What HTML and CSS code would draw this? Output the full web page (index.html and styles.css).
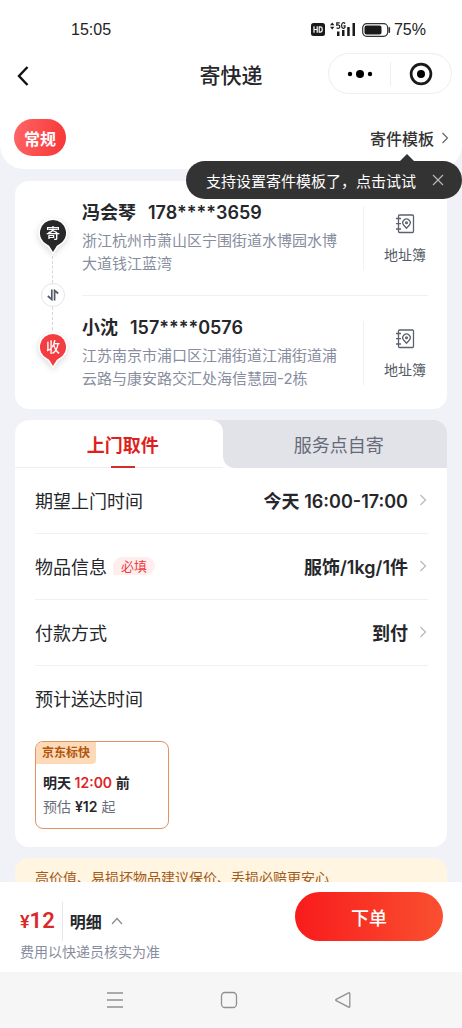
FILE: index.html
```html
<!DOCTYPE html>
<html lang="zh-CN">
<head>
<meta charset="utf-8">
<meta name="viewport" content="width=device-width, initial-scale=1">
<title>寄快递</title>
<link rel="stylesheet" href="styles.css">
</head>
<body>
<div class="app">
  <header class="header">
    <div class="status">
      <span class="clock">15:05</span>
      <div class="status-icons">
        <svg width="14" height="13" viewBox="0 0 14 13" aria-hidden="true"><rect width="14" height="13" rx="2.5" fill="#1a1a1a"/><path d="M3 3.2v6.6M6.2 3.2v6.600M3 6.5h3.2M8.2 3.8v5.4h1.100c1.2 0 1.9-.9 1.9-2.7s-.7-2.7-1.9-2.7z" fill="none" stroke="#fff" stroke-width="1.2"/></svg>
        <svg class="signal" width="26" height="15" viewBox="0 0 26 15" aria-hidden="true"><path d="M0 3.2 2.2.6l2.2 2.6zM0 4.8l2.2 2.6 2.2-2.6z" fill="#1a1a1a"/><path d="M9.7.9H6.8v2.3c1.8-.6 3 0 3 1.5 0 1.7-2 2.1-3.2 1M15 1.8C14-.1 11.6 .4 11.6 3.5s2.6 3.5 3.4 1.8V3.9h-1.5" fill="none" stroke="#1a1a1a" stroke-width="1.2"/><path d="M7 9.500h2.500V14H7zM12 8h2.500v6H12zM17.200 5h2.500v9h-2.500zM22.500 1H25v13h-2.500z" fill="#1a1a1a"/></svg>
        <svg class="battery" width="29" height="14" viewBox="0 0 29 14" aria-hidden="true"><rect x=".7" y=".7" width="25" height="12.600" rx="4" fill="none" stroke="#333" stroke-width="1.200"/><rect x="2.500" y="2.500" width="17" height="9" rx="2" fill="#1a1a1a"/><path d="M27.300 4.800v4.400" stroke="#333" stroke-width="1.600" stroke-linecap="round"/></svg>
        <span>75%</span>
      </div>
    </div>
    <div class="titlebar">
      <button class="back" aria-label="返回"><svg width="14" height="22" viewBox="0 0 14 22"><path d="M11.500 2 3 11l8.500 9" fill="none" stroke="#111" stroke-width="2.400"/></svg></button>
      <h1 class="title">寄快递</h1>
      <div class="capsule">
        <button aria-label="更多"><svg width="26" height="10" viewBox="0 0 26 10"><circle cx="3" cy="5" r="2.200"/><circle cx="13" cy="5" r="4"/><circle cx="23" cy="5" r="2.200"/></svg></button>
        <button aria-label="关闭"><svg width="24" height="24" viewBox="0 0 24 24"><circle cx="12" cy="12" r="9.900" fill="none" stroke="#1a1a1a" stroke-width="2.700"/><circle cx="12" cy="12" r="4"/></svg></button>
      </div>
    </div>
    <div class="modes">
      <button class="mode">常规</button>
      <a class="template-link" href="#">寄件模板<svg width="8" height="12" viewBox="0 0 8 12"><path d="m1.500 1 5 5-5 5" fill="none" stroke="#666" stroke-width="1.200"/></svg></a>
    </div>
    <div class="tooltip" role="status">
      <span>支持设置寄件模板了，点击试试</span>
      <button aria-label="关闭提示"><svg width="12" height="12" viewBox="0 0 12 12"><path d="m1 1 10 10M11 1 1 11" stroke="#bbb" stroke-width="1.100"/></svg></button>
    </div>
  </header>

  <main class="content">
    <section class="card parties">
      <div class="rail">
        <svg class="pin" width="40" height="40" viewBox="0 0 40 40"><path d="M20 2.500a14.500 14.500 0 0 0-6.500 27.500c1.500 1 1.500 1 2.200 2.200L20 38.500l4.300-6.300c.7-1.200.7-1.200 2.200-2.200A14.500 14.500 0 0 0 20 2.500z" fill="#fff"/><path d="M20 4a13 13 0 0 0-5.500 24.800c1.500.7 1.800 1.100 2.400 2.200L20 36l3.100-5c.6-1.100.9-1.500 2.400-2.200A13 13 0 0 0 20 4z" fill="#28282a"/><text x="20" y="22">寄</text></svg>
        <span class="dash dash-top"></span>
        <button class="swap" aria-label="交换寄收件人"><svg width="12" height="12" viewBox="0 0 12 12"><path d="M4.800 .5v10L.8 7M7.600 11.500v-10l3.600 3" fill="none" stroke="#555b68" stroke-width="1.700"/></svg></button>
        <span class="dash"></span>
        <svg class="pin" width="40" height="40" viewBox="0 0 40 40"><path d="M20 2.500a14.500 14.500 0 0 0-6.500 27.500c1.500 1 1.500 1 2.200 2.200L20 38.500l4.300-6.300c.7-1.200.7-1.200 2.200-2.200A14.500 14.500 0 0 0 20 2.500z" fill="#fff"/><path d="M20 4a13 13 0 0 0-5.500 24.800c1.500.7 1.800 1.100 2.400 2.200L20 36l3.100-5c.6-1.100.9-1.500 2.400-2.200A13 13 0 0 0 20 4z" fill="#f33d40"/><text x="20" y="22">收</text></svg>
      </div>
      <div class="people">
        <div class="person">
          <div class="who">
            <h2 class="name"><span>冯会琴</span><span>178****3659</span></h2>
            <p class="address">浙江杭州市萧山区宁围街道水博园水博大道钱江蓝湾</p>
          </div>
          <button class="book"><svg width="20" height="20" viewBox="0 0 20 20"><g fill="none" stroke="#5c616e" stroke-width="1.300"><rect x="3.500" y="1" width="15" height="17.500" rx="1"/><path d="M1 4.500h5M1 9.700h5M1 15h5M11.500 14.200 8.600 11a3.700 3.700 0 1 1 5.800 0z"/><circle cx="11.500" cy="8.800" r=".9"/></g></svg>地址簿</button>
        </div>
        <div class="person">
          <div class="who">
            <h2 class="name"><span>小沈</span><span>157****0576</span></h2>
            <p class="address">江苏南京市浦口区江浦街道江浦街道浦云路与康安路交汇处海信慧园-2栋</p>
          </div>
          <button class="book"><svg width="20" height="20" viewBox="0 0 20 20"><g fill="none" stroke="#5c616e" stroke-width="1.300"><rect x="3.500" y="1" width="15" height="17.500" rx="1"/><path d="M1 4.500h5M1 9.700h5M1 15h5M11.500 14.200 8.600 11a3.700 3.700 0 1 1 5.800 0z"/><circle cx="11.500" cy="8.800" r=".9"/></g></svg>地址簿</button>
        </div>
      </div>
    </section>

    <section class="card">
      <div class="tabs" role="tablist">
        <button class="tab tab-active" role="tab" aria-selected="true">上门取件</button>
        <button class="tab tab-other" role="tab" aria-selected="false">服务点自寄</button>
      </div>
      <div class="rows">
        <button class="row"><span>期望上门时间</span><strong>今天 16:00-17:00</strong><svg width="8" height="12" viewBox="0 0 8 12"><path d="m1.500 1 5 5-5 5" fill="none" stroke="#b5b8c0" stroke-width="1.200"/></svg></button>
        <button class="row"><span>物品信息</span><em class="required">必填</em><strong>服饰/1kg/1件</strong><svg width="8" height="12" viewBox="0 0 8 12"><path d="m1.500 1 5 5-5 5" fill="none" stroke="#b5b8c0" stroke-width="1.200"/></svg></button>
        <button class="row"><span>付款方式</span><strong>到付</strong><svg width="8" height="12" viewBox="0 0 8 12"><path d="m1.500 1 5 5-5 5" fill="none" stroke="#b5b8c0" stroke-width="1.200"/></svg></button>
        <h2 class="row row-last">预计送达时间</h2>
        <button class="option">
          <span class="option-tag">京东标快</span>
          <span class="option-time">明天 <b>12:00</b> 前</span>
          <span class="option-price">预估 <b>¥12</b> 起</span>
        </button>
      </div>
    </section>

    <section class="notice">高价值、易损坏物品建议保价、丢损必赔更安心</section>
  </main>

  <footer class="checkout">
    <div class="cost">
      <div class="total">
        <span class="price"><small>¥</small>12</span>
        <button class="detail">明细<svg width="12" height="8" viewBox="0 0 12 8"><path d="m1 7 5-5.500L11 7" fill="none" stroke="#888" stroke-width="1.200"/></svg></button>
      </div>
      <p class="hint">费用以快递员核实为准</p>
    </div>
    <button class="submit">下单</button>
  </footer>
  <nav class="sysnav">
    <button aria-label="最近任务"><svg width="18" height="18" viewBox="0 0 18 18"><path d="M1 2h16M1 9h16M1 16h16"/></svg></button>
    <button aria-label="主页"><svg width="18" height="18" viewBox="0 0 18 18"><rect x="1.500" y="1.500" width="15" height="15" rx="3.500"/></svg></button>
    <button aria-label="返回"><svg width="18" height="18" viewBox="0 0 18 18"><path d="M15.800 2.500v13c0 .8-.5 1-1.200.6L2.200 9.700c-.7-.4-.7-1 0-1.400l12.400-6.400c.7-.4 1.200-.2 1.200.6z"/></svg></button>
  </nav>
</div>
</body>
</html>
```
FILE: styles.css
```css
* {
  box-sizing: border-box;
}

body {
  margin: 0;
  background: #f0f2f7;
  color: #26272b;
  font-family: Inter, "Noto Sans CJK SC", sans-serif;
  font-size: 18px;
}

h1, h2, p {
  margin: 0;
  font-weight: 400;
}

button {
  margin: 0;
  padding: 0;
  border: 0;
  background: none;
  color: inherit;
  font: inherit;
  cursor: pointer;
}

svg {
  flex: none;
}

.app {
  display: flex;
  flex-direction: column;
  height: 100vh;
}

/* Header */
.header {
  position: relative;
  z-index: 1;
  flex: none;
  padding-bottom: 13px;
  background: #fff;
  border-radius: 0 0 24px 24px;
}

.status {
  display: flex;
  align-items: center;
  justify-content: space-between;
  height: 53px;
  padding: 6px 36px 0 71px;
  color: #222;
  font-family: "Liberation Sans", Arial, sans-serif;
  font-size: 16px;
}

.status-icons {
  display: flex;
  align-items: center;
}

.signal {
  margin-left: 5px;
}

.battery {
  margin: 0 3px 0 6px;
}

.titlebar {
  display: grid;
  grid-template-columns: 124px 1fr 124px;
  align-items: center;
  height: 41px;
  padding: 0 10px;
}

.back {
  display: flex;
  padding: 6px 6px 2px;
  justify-self: start;
}

.title {
  padding-top: 5px;
  font-size: 21px;
  font-weight: 500;
  line-height: 28px;
  text-align: center;
}

.capsule {
  display: flex;
  height: 41px;
  border: 1px solid #eee;
  border-radius: 21px;
}

.capsule button {
  display: flex;
  flex: 1;
  align-items: center;
  justify-content: center;
}

.capsule button + button {
  background: linear-gradient(#eee, #eee) left center / 1px 24px no-repeat;
}

.modes {
  display: flex;
  align-items: center;
  justify-content: space-between;
  margin-top: 25px;
  padding: 0 13px 0 14px;
}

.mode {
  width: 52px;
  height: 37px;
  border-radius: 19px;
  background: linear-gradient(100deg, #ff6566, #f83535);
  color: #fff;
  font-size: 16px;
  font-weight: 700;
}

.template-link {
  display: flex;
  align-items: center;
  gap: 7px;
  color: #333;
  font-size: 16px;
  font-weight: 500;
  text-decoration: none;
}

.tooltip {
  position: absolute;
  top: 161px;
  right: 0;
  display: flex;
  align-items: center;
  gap: 16px;
  height: 38px;
  padding: 0 18px 0 20px;
  border-radius: 19px;
  background: #333;
  color: #fff;
  font-size: 15px;
  white-space: nowrap;
}

.tooltip::before {
  content: "";
  position: absolute;
  right: 48px;
  bottom: 100%;
  border: 7px solid transparent;
  border-top: 0;
  border-bottom-color: #333;
}

.tooltip button {
  display: flex;
}

/* Content */
.content {
  display: flex;
  flex: 1;
  flex-direction: column;
  gap: 11px;
  min-height: 0;
  padding: 12px 15px 0;
  overflow: hidden;
}

.card {
  flex: none;
  border-radius: 14px;
  background: #fff;
  overflow: hidden;
}

.parties {
  display: flex;
  padding-right: 19px;
}

.rail {
  display: flex;
  flex: none;
  flex-direction: column;
  align-items: center;
  width: 67px;
  padding: 35px 0 0 8px;
}

.pin {
  filter: drop-shadow(0 2px 3px rgba(0, 0, 0, 0.15));
}

.pin text {
  fill: #fff;
  font-size: 14px;
  font-weight: 500;
  text-anchor: middle;
}

.dash {
  height: 23px;
  border-left: 1px dashed #d5d7dd;
}

.dash-top {
  height: 27px;
}

.swap {
  display: flex;
  align-items: center;
  justify-content: center;
  width: 24px;
  height: 24px;
  border: 1px solid #e3e5ea;
  border-radius: 50%;
}

.people {
  flex: 1;
  min-width: 0;
}

.person {
  display: flex;
  align-items: center;
  gap: 18px;
  height: 114px;
}

.person + .person {
  border-top: 1px solid #f0f1f4;
}

.who {
  flex: 1;
  min-width: 0;
}

.name {
  display: flex;
  gap: 12px;
  margin-bottom: 4px;
  font-size: 18px;
  font-weight: 600;
  line-height: 24px;
}

.address {
  color: #878d9e;
  font-size: 15px;
  line-height: 23px;
}

.book {
  display: flex;
  flex: none;
  flex-direction: column;
  align-items: center;
  gap: 11px;
  height: 64px;
  padding: 8px 2px 0 20px;
  border-left: 1px solid #f0f1f4;
  color: #555a66;
  font-size: 14px;
  line-height: 20px;
}

/* Pickup details */
.tabs {
  display: flex;
  height: 48px;
  background: linear-gradient(#e2e3e8 50%, #fff 50%);
}

.tab {
  position: relative;
  padding-left: 8px;
  color: #666a78;
}

.tab-active {
  flex: 12;
  border-bottom: 1px solid #eee;
  border-radius: 0 12px 0 0;
  background: #fff;
  color: #df1f20;
  font-weight: 700;
}

.tab-active::after {
  content: "";
  position: absolute;
  bottom: -1px;
  left: 50%;
  width: 24px;
  height: 2px;
  margin-left: -8px;
  background: #d52c2c;
}

.tab-other {
  flex: 13;
  border-radius: 0 0 0 12px;
  background: #e2e3e8;
}

.rows {
  padding: 0 19px 18px 20px;
}

.row {
  display: flex;
  align-items: center;
  width: 100%;
  height: 66px;
  padding-bottom: 2px;
  border-bottom: 1px solid #f0f1f4;
  font-size: 18px;
}

.row strong {
  margin-left: auto;
  font-size: 18px;
  font-weight: 600;
}

.row svg {
  margin: 0 1px 0 11px;
}

.row-last {
  border-bottom: 0;
}

.required {
  margin-left: 6px;
  padding: 0 8px;
  border-radius: 9px 9px 9px 2px;
  background: #feeeee;
  color: #ee3b3b;
  font-size: 13px;
  font-style: normal;
  line-height: 18px;
}

.option {
  display: flex;
  flex-direction: column;
  align-items: flex-start;
  width: 134px;
  height: 88px;
  margin-top: 9px;
  border: 1px solid #df9460;
  border-radius: 8px;
  font-size: 14px;
  line-height: 24px;
  overflow: hidden;
}

.option-tag {
  margin-bottom: 7px;
  padding: 0 6px;
  border-radius: 0 0 4px 0;
  background: #fcdab8;
  color: #b2560d;
  font-size: 12px;
  font-weight: 700;
  line-height: 22px;
}

.option-time,
.option-price {
  padding-left: 7px;
}

.option-time {
  font-weight: 600;
}

.option-time b {
  color: #e02426;
  font-weight: 600;
}

.option-price {
  color: #6b6f7b;
}

.option-price b {
  color: #26272b;
  font-weight: 600;
}

.notice {
  flex: none;
  padding: 8px 20px;
  border-radius: 14px;
  background: #fff5e1;
  color: #a35b1c;
  font-size: 14px;
  line-height: 24px;
}

/* Checkout bar */
.checkout {
  display: flex;
  flex: none;
  align-items: flex-start;
  justify-content: space-between;
  height: 90px;
  padding: 10px 19px 0 20px;
  background: #fff;
}

.cost {
  padding-top: 10px;
}

.total {
  display: flex;
  align-items: center;
  height: 38px;
}

.price {
  padding-right: 7px;
  border-right: 1px solid #e6e7eb;
  color: #d92a2a;
  font-family: Roboto, sans-serif;
  font-size: 22px;
  font-weight: 600;
  line-height: 38px;
}

.price small {
  font-size: 18px;
}

.detail {
  display: flex;
  align-items: center;
  gap: 9px;
  padding-left: 7px;
  font-size: 16px;
  font-weight: 700;
}

.hint {
  color: #878d9e;
  font-size: 14px;
  line-height: 24px;
}

.submit {
  width: 148px;
  height: 49px;
  border-radius: 25px;
  background: linear-gradient(90deg, #f81b1c, #fa5030);
  color: #fff;
  font-weight: 500;
}

.sysnav {
  display: flex;
  flex: none;
  align-items: center;
  justify-content: center;
  gap: 96px;
  height: 56px;
  padding-right: 5px;
  background: #f6f6f6;
}

.sysnav button {
  display: flex;
}

.sysnav svg {
  fill: none;
  stroke: #909090;
  stroke-width: 1.3;
}
```
